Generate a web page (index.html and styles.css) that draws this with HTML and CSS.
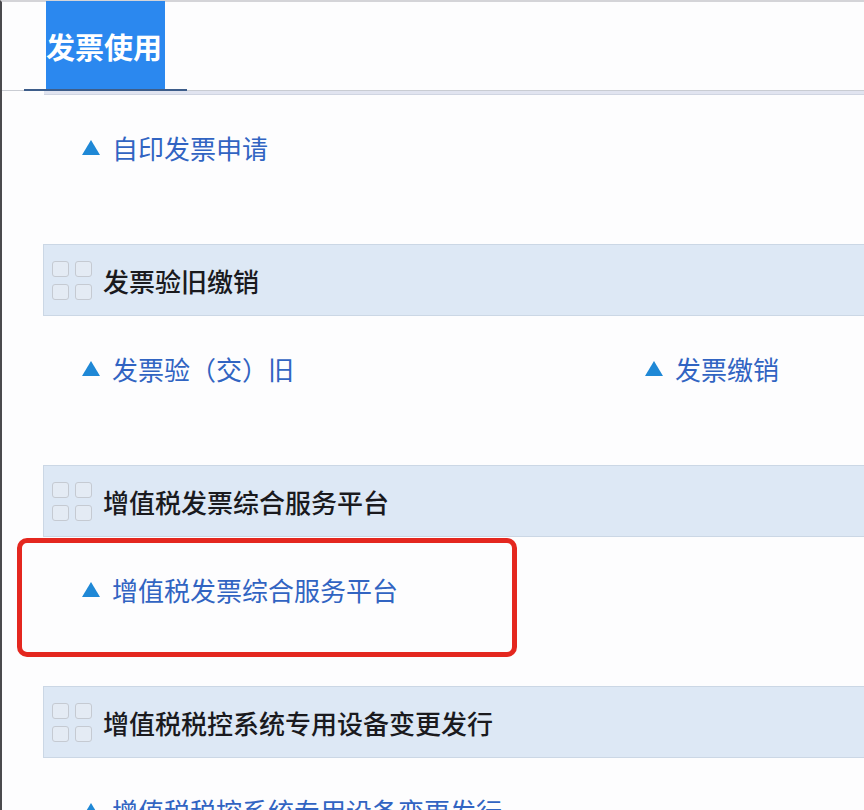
FILE: index.html
```html
<!DOCTYPE html>
<html lang="zh-CN">
<head>
    <meta charset="UTF-8">
    <title>发票使用</title>
    <link rel="stylesheet" href="styles.css">
</head>
<body>
    <div class="frame">
        <div class="tabs">
            <div class="tab-wrap">
                <span class="tab active">发票使用</span>
            </div>
        </div>
        <div class="tab-strip"></div>

        <div class="content">
            <div class="link-row">
                <a class="link" href="#">自印发票申请</a>
            </div>

            <div class="group-head">
                <span class="grid-icon"><i></i><i></i><i></i><i></i></span>
                发票验旧缴销
            </div>
            <div class="link-row two-col">
                <a class="link" href="#">发票验（交）旧</a>
                <a class="link" href="#">发票缴销</a>
            </div>

            <div class="group-head">
                <span class="grid-icon"><i></i><i></i><i></i><i></i></span>
                增值税发票综合服务平台
            </div>
            <div class="link-row marked">
                <a class="link" href="#">增值税发票综合服务平台</a>
                <div class="mark-box"></div>
            </div>

            <div class="group-head">
                <span class="grid-icon"><i></i><i></i><i></i><i></i></span>
                增值税税控系统专用设备变更发行
            </div>
            <div class="link-row">
                <a class="link" href="#">增值税税控系统专用设备变更发行</a>
            </div>
        </div>
    </div>
</body>
</html>
```

FILE: styles.css
```css
:root {
    --tab-blue: #2b88ef;
    --tab-dark: #3d5d8a;
    --head-bg: #dde8f5;
    --head-border: #cbd7e5;
    --link-color: #3164c2;
    --arrow-color: #1f88d6;
    --text-color: #1a1a1e;
}

* {
    margin: 0;
    padding: 0;
    box-sizing: border-box;
}

body {
    font-family: "Noto Sans CJK SC", "Noto Sans", sans-serif;
    background: #fff;
    color: var(--text-color);
    overflow: hidden;
}

.frame {
    border-left: 2px solid #4a4a4e;
    border-top: 2px solid #d4d4d8;
    min-height: 810px;
    background: #fdfdfe;
}

/* tab bar */
.tabs {
    height: 89px;
    border-bottom: 1px solid #c9ccd3;
    display: flex;
    align-items: flex-end;
}

.tab-wrap {
    margin-left: 22px;
    padding: 0 22px;
    border-bottom: 2px solid var(--tab-dark);
    margin-bottom: -1px;
    display: flex;
}

.tab {
    display: block;
    width: 119px;
    height: 88px;
    line-height: 90px;
    background: var(--tab-blue);
    color: #fff;
    font-size: 29px;
    font-weight: 700;
    white-space: nowrap;
}

.tab-strip {
    margin-left: 42px;
    height: 4px;
    background: #e1e4f0;
    border-bottom: 1px solid #d0d5e2;
}

/* content */
.content {
    padding-left: 41px;
}

.link-row {
    height: 149px;
    padding: 38px 0 0 39px;
    position: relative;
}

.link-row.two-col {
    display: grid;
    grid-template-columns: 563px 1fr;
    align-items: start;
}

.link {
    display: inline-flex;
    align-items: center;
    font-size: 26px;
    line-height: 30px;
    color: var(--link-color);
    text-decoration: none;
    white-space: nowrap;
}

.link::before {
    content: '';
    width: 0;
    height: 0;
    border-left: 9px solid transparent;
    border-right: 9px solid transparent;
    border-bottom: 15px solid var(--arrow-color);
    margin-right: 12px;
    margin-top: -2px;
}

.group-head {
    height: 72px;
    background: var(--head-bg);
    border: 1px solid var(--head-border);
    border-right: none;
    display: flex;
    align-items: center;
    padding-left: 8px;
    font-size: 26px;
    font-weight: 500;
    color: var(--text-color);
    white-space: nowrap;
}

.grid-icon {
    display: grid;
    grid-template-columns: 17px 17px;
    grid-template-rows: 16px 16px;
    gap: 7px 6px;
    margin-right: 11px;
}

.grid-icon i {
    border: 1.5px solid #c5cad2;
    border-radius: 3px;
    background: #e4ebf4;
}

/* red annotation around the highlighted link */
.mark-box {
    position: absolute;
    left: -26px;
    top: 1px;
    width: 500px;
    height: 119px;
    border: 5px solid #e4271f;
    border-radius: 10px;
}
```
